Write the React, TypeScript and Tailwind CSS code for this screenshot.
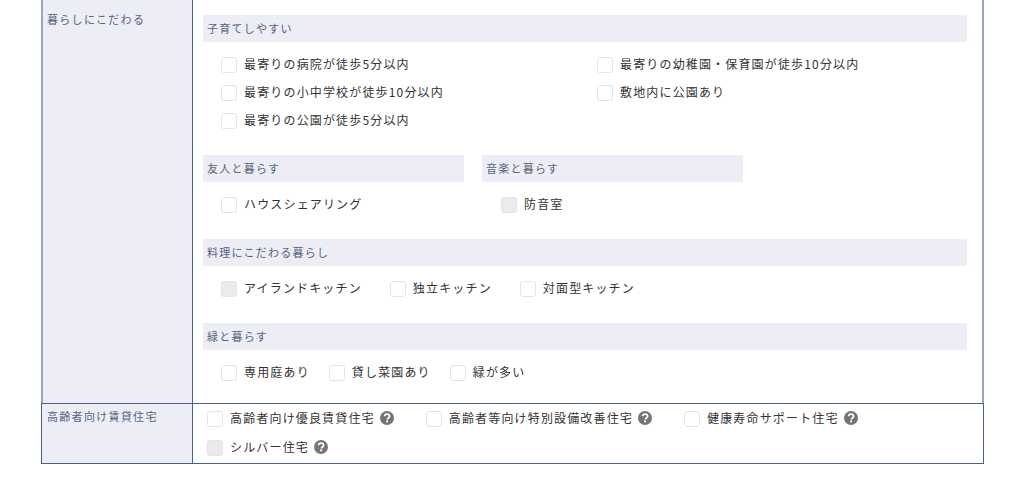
const font = { fontFamily: '"Noto Sans CJK JP", sans-serif' };

function Help() {
  return (
    <svg viewBox="0 0 14 14" className="w-[14px] h-[14px] shrink-0 ml-[5px] mb-[2px]">
      <circle cx="7" cy="7" r="7" fill="#757575" />
      <path d="M4.6 5.3c0-1.4 1.1-2.2 2.5-2.2s2.5.9 2.5 2.1c0 1.8-2.2 1.7-2.2 3.3" fill="none" stroke="#fff" strokeWidth="1.7" />
      <rect x="6.2" y="9.4" width="1.9" height="1.9" fill="#fff" />
    </svg>
  );
}

function Check({ label, gray, help, className = "" }: { label: string; gray?: boolean; help?: boolean; className?: string }) {
  return (
    <div className={"flex items-center h-[28px] " + className}>
      <span className={"w-[16px] h-[16px] rounded-[3px] border border-[#e4e4e4] shrink-0 mr-[7px] " + (gray ? "bg-[#ebebeb]" : "bg-white")} />
      <span className="text-[12px] tracking-[1.16px] text-[#333333] whitespace-nowrap pb-[2px]">{label}</span>
      {help && <Help />}
    </div>
  );
}

function Head({ children, className = "" }: { children: string; className?: string }) {
  return (
    <div className={"h-[27px] bg-[#ecedf5] pl-[4px] pb-[1px] flex items-center text-[11px] tracking-[1.25px] text-[#56637f] " + className}>
      {children}
    </div>
  );
}

export default function App() {
  return (
    <div className="w-[1024px] h-[497px] bg-white overflow-hidden pl-[41px]" style={font}>
      <div className="w-[943px] border-b border-[#4a6090]">
        <div className="flex h-[403px] border-l-2 border-r-2 border-[#98a5c4]">
          <div className="w-[150px] bg-[#ecedf5] border-r border-[#4a6090] pl-[4px] pt-[11px] text-[11px] tracking-[1.3px] text-[#56637f] leading-[16px]">
            暮らしにこだわる
          </div>
          <div className="flex-1 pl-[10px] pr-[15px] pt-[15px]">
            <Head>子育てしやすい</Head>
            <div className="grid grid-cols-[376px_1fr] pl-[18px] pt-[9px]">
              <Check label="最寄りの病院が徒歩5分以内" />
              <Check label="最寄りの幼稚園・保育園が徒歩10分以内" />
              <Check label="最寄りの小中学校が徒歩10分以内" />
              <Check label="敷地内に公園あり" />
              <Check label="最寄りの公園が徒歩5分以内" />
            </div>
            <div className="flex gap-[18px] mt-[20px]">
              <div className="w-[261px]">
                <Head>友人と暮らす</Head>
                <div className="pl-[18px] pt-[9px]">
                  <Check label="ハウスシェアリング" />
                </div>
              </div>
              <div className="w-[261px]">
                <Head>音楽と暮らす</Head>
                <div className="pl-[19px] pt-[9px]">
                  <Check label="防音室" gray />
                </div>
              </div>
            </div>
            <Head className="mt-[20px]">料理にこだわる暮らし</Head>
            <div className="flex pl-[18px] pt-[9px] gap-[28px]">
              <Check label="アイランドキッチン" gray />
              <Check label="独立キッチン" />
              <Check label="対面型キッチン" />
            </div>
            <Head className="mt-[20px]">緑と暮らす</Head>
            <div className="flex pl-[18px] pt-[9px] gap-[19px]">
              <Check label="専用庭あり" />
              <Check label="貸し菜園あり" />
              <Check label="緑が多い" />
            </div>
          </div>
        </div>
        <div className="flex h-[60px] border-t border-[#4a6090] border-l border-r">
          <div className="w-[151px] bg-[#ecedf5] border-r border-[#4a6090] pl-[5px] pt-[4px] text-[11px] tracking-[1.3px] text-[#56637f] leading-[16px]">
            高齢者向け賃貸住宅
          </div>
          <div className="flex-1 pl-[14px] pt-[1px]">
            <div className="flex gap-[32px]">
              <Check label="高齢者向け優良賃貸住宅" help />
              <Check label="高齢者等向け特別設備改善住宅" help />
              <Check label="健康寿命サポート住宅" help />
            </div>
            <div className="flex mt-[1px]">
              <Check label="シルバー住宅" gray help />
            </div>
          </div>
        </div>
      </div>
    </div>
  );
}
